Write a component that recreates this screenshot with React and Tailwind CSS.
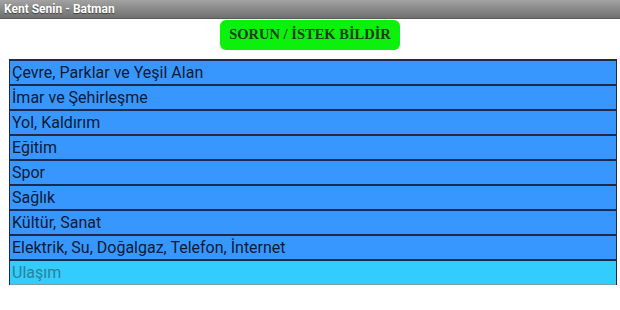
const ITEMS = [
  'Çevre, Parklar ve Yeşil Alan',
  'İmar ve Şehirleşme',
  'Yol, Kaldırım',
  'Eğitim',
  'Spor',
  'Sağlık',
  'Kültür, Sanat',
  'Elektrik, Su, Doğalgaz, Telefon, İnternet',
];

export default function App() {
  return (
    <div className="w-[620px] h-[310px] bg-white overflow-hidden font-['Roboto',sans-serif]">
      <div className="h-[19px] bg-gradient-to-b from-[#a3a3a3] to-[#707070] border-b border-[#5a5a5a] flex items-center px-[4px]">
        <span className="text-white font-bold text-[12px] leading-none [text-shadow:0_1px_1px_rgba(0,0,0,0.5)]">
          Kent Senin - Batman
        </span>
      </div>

      <div className="flex justify-center pt-[1px]">
        <button className="w-[180px] h-[30px] rounded-[6px] bg-[#0cf10c] font-['Liberation_Serif',serif] font-bold text-[14.5px] text-[#1b3b1b]">
          SORUN / İSTEK BİLDİR
        </button>
      </div>

      <ul className="ml-[9px] mr-[3px] mt-[9px] border-l border-r border-[#1c2a50]">
        {ITEMS.map((item) => (
          <li
            key={item}
            className="h-[25px] bg-[#3797ff] border-t-2 border-[#1c2a50] flex items-center pl-[2px] text-[16px] text-[#0d1a33]"
          >
            {item}
          </li>
        ))}
        <li className="h-[26px] bg-[#33ccff] border-t-2 border-b border-[#1c2a50] border-b-[#7a9aa8] flex items-center pl-[2px] text-[16px] text-[#2a8396]">
          Ulaşım
        </li>
      </ul>
    </div>
  );
}
